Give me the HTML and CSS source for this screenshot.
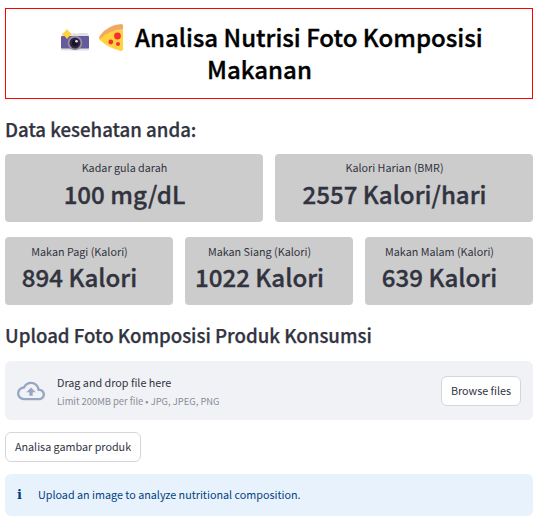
FILE: index.html
```html
<!DOCTYPE html>
<html lang="id">
<head>
<meta charset="utf-8">
<title>Analisa Nutrisi</title>
<link rel="stylesheet" href="styles.css">
</head>
<body>
<main class="page">
  <h1 class="title">
    <span class="title-line first">
      <svg class="camera" width="28" height="23" viewBox="0 0 28 23" aria-hidden="true">
        <path d="M1 7V4.500h7V7zM18 7V5q0-1 1-1h7q1 0 1.300 1L28 8H18z" fill="#e1e0e2"/>
        <path d="M9 8l2-3.500h7L20 8z" fill="#e1e0e2"/>
        <rect y="7" width="28" height="13" rx="1" fill="#655b9b"/>
        <path d="M0 19.500h28v1q0 1-1 1H1q-1 0-1-1z" fill="#e1e0e2"/>
        <circle cx="14" cy="14" r="7.300" fill="#998f9d"/>
        <circle cx="14" cy="14" r="5.500" fill="#31264a"/>
        <circle cx="14" cy="14" r="3.200" fill="#191323"/>
        <circle cx="15.500" cy="12.200" r="1.300" fill="#eee9f6"/>
        <path d="M6 0l2.300 2.700L11 5 8.300 7.300 6 10 3.700 7.300 1 5l2.700-2.300z" fill="#ffd33d"/>
      </svg>
      <svg class="pizza" width="25" height="28" viewBox="0 0 25 28" aria-hidden="true">
        <path d="M0 14Q8 5.500 24 6v19q0 2-2 1.900Q9 24 1 16q-1-1-1-2z" fill="#ffd33d"/>
        <path d="M1 15q-1.500-1 0-3.500Q8.500 1 22.500 0q1.500 0 1.500 1.500v4Q9.500 6 1 15z" fill="#f1a960"/>
        <circle cx="18.500" cy="12" r="3.400" fill="#f72f35"/>
        <circle cx="11.800" cy="18" r="2.400" fill="#f72f35"/>
        <circle cx="19" cy="20" r="2" fill="#f72f35"/>
      </svg>
      <span class="title-text">Analisa Nutrisi Foto Komposisi</span>
    </span>
    <span class="title-line second">Makanan</span>
  </h1>

  <h2 class="heading health">Data kesehatan anda:</h2>
  <section class="metrics two">
    <div class="metric"><div class="label">Kadar gula darah</div><div class="value">100 mg/dL</div></div>
    <div class="metric"><div class="label">Kalori Harian (BMR)</div><div class="value">2557 Kalori/hari</div></div>
  </section>
  <section class="metrics three">
    <div class="metric"><div class="label">Makan Pagi (Kalori)</div><div class="value">894 Kalori</div></div>
    <div class="metric"><div class="label">Makan Siang (Kalori)</div><div class="value">1022 Kalori</div></div>
    <div class="metric"><div class="label">Makan Malam (Kalori)</div><div class="value">639 Kalori</div></div>
  </section>

  <h2 class="heading upload">Upload Foto Komposisi Produk Konsumsi</h2>
  <section class="dropzone">
    <svg class="cloud" width="28" height="28" viewBox="0 0 24 24" aria-hidden="true">
      <path fill="#97a6c3" d="M19.350 10.040C18.670 6.590 15.640 4 12 4 9.110 4 6.600 5.640 5.350 8.040 2.340 8.360 0 10.910 0 14c0 3.310 2.690 6 6 6h13c2.760 0 5-2.240 5-5 0-2.640-2.050-4.780-4.650-4.960zM19 18H6c-2.210 0-4-1.790-4-4 0-2.050 1.530-3.760 3.560-3.970l1.070-.110.500-.950C8.080 7.140 9.940 6 12 6c2.620 0 4.880 1.860 5.390 4.430l.300 1.500 1.530.110c1.560.100 2.780 1.410 2.780 2.960 0 1.650-1.350 3-3 3zM8 13h2.550v3h2.900v-3H16l-4-4z"/>
    </svg>
    <div class="drop-text">
      <div class="drop-main">Drag and drop file here</div>
      <div class="drop-sub">Limit 200MB per file • JPG, JPEG, PNG</div>
    </div>
    <button class="button browse">Browse files</button>
  </section>
  <button class="button analyze">Analisa gambar produk</button>
  <div class="info"><span class="info-icon">i</span><span class="info-text">Upload an image to analyze nutritional composition.</span></div>
</main>
</body>
</html>
```
FILE: styles.css
```css
* { box-sizing: border-box; }
body {
  margin: 0;
  background: #fff;
  color: #31333f;
  font-family: "Noto Sans CJK JP", "Noto Sans", sans-serif;
  font-size: 10.78px;
  line-height: 18px;
  white-space: nowrap;
}
.page { width: 533px; padding: 8px 0 0 5px; }
.title {
  height: 91px;
  margin: 0;
  padding-top: 12px;
  border: 1px solid #f00;
  color: #000;
  font-size: 24.03px;
  font-weight: 500;
  line-height: 32px;
  -webkit-text-stroke: 0.35px currentColor;
}
.title-line { display: flex; height: 32px; }
.first { padding-left: 55px; }
.second { padding-left: 201px; }
.camera { margin-top: 8px; }
.pizza { margin: 3px 11px 0 10px; }
.camera, .pizza { -webkit-text-stroke: 0; }
.heading {
  margin: 0;
  font-size: 18.65px;
  font-weight: 500;
  line-height: 24px;
  -webkit-text-stroke: 0.25px currentColor;
}
.health { margin: 18px 0 13px; }
.metrics { display: grid; gap: 12px; }
.two { grid-template-columns: 1fr 1fr; }
.three { grid-template-columns: repeat(3, 1fr); margin-top: 15px; }
.metric {
  height: 68px;
  padding: 5px 19px 0 0;
  border-radius: 4px;
  background: #ccc;
  text-align: center;
}
.label { height: 17px; }
.two .label { line-height: 16px; }
.value {
  font-size: 24.1px;
  font-weight: 500;
  line-height: 36px;
  -webkit-text-stroke: 0.35px currentColor;
}
.upload { margin: 18px 0 14px; }
.dropzone {
  display: flex;
  align-items: center;
  height: 59px;
  padding: 0 12px;
  border-radius: 6px;
  background: #f0f2f6;
}
.drop-text { margin: 2px auto 0 12px; }
.drop-main { height: 19px; }
.drop-sub { color: #8b8d97; font-size: 9.38px; }
.button {
  display: block;
  height: 30px;
  padding: 0 0 2px;
  border: 1px solid #d6d6d8;
  border-radius: 6px;
  background: #fff;
  color: inherit;
  font: inherit;
}
.browse { width: 80px; }
.analyze { width: 136px; margin-top: 12px; }
.info {
  display: flex;
  align-items: center;
  height: 42px;
  margin-top: 12px;
  padding-left: 12px;
  border-radius: 6px;
  background: #e8f2fc;
  color: #004280;
}
.info-icon { width: 21px; font-family: "DejaVu Serif", serif; font-size: 13px; font-weight: bold; }
.info-text { padding-bottom: 2px; }
```
